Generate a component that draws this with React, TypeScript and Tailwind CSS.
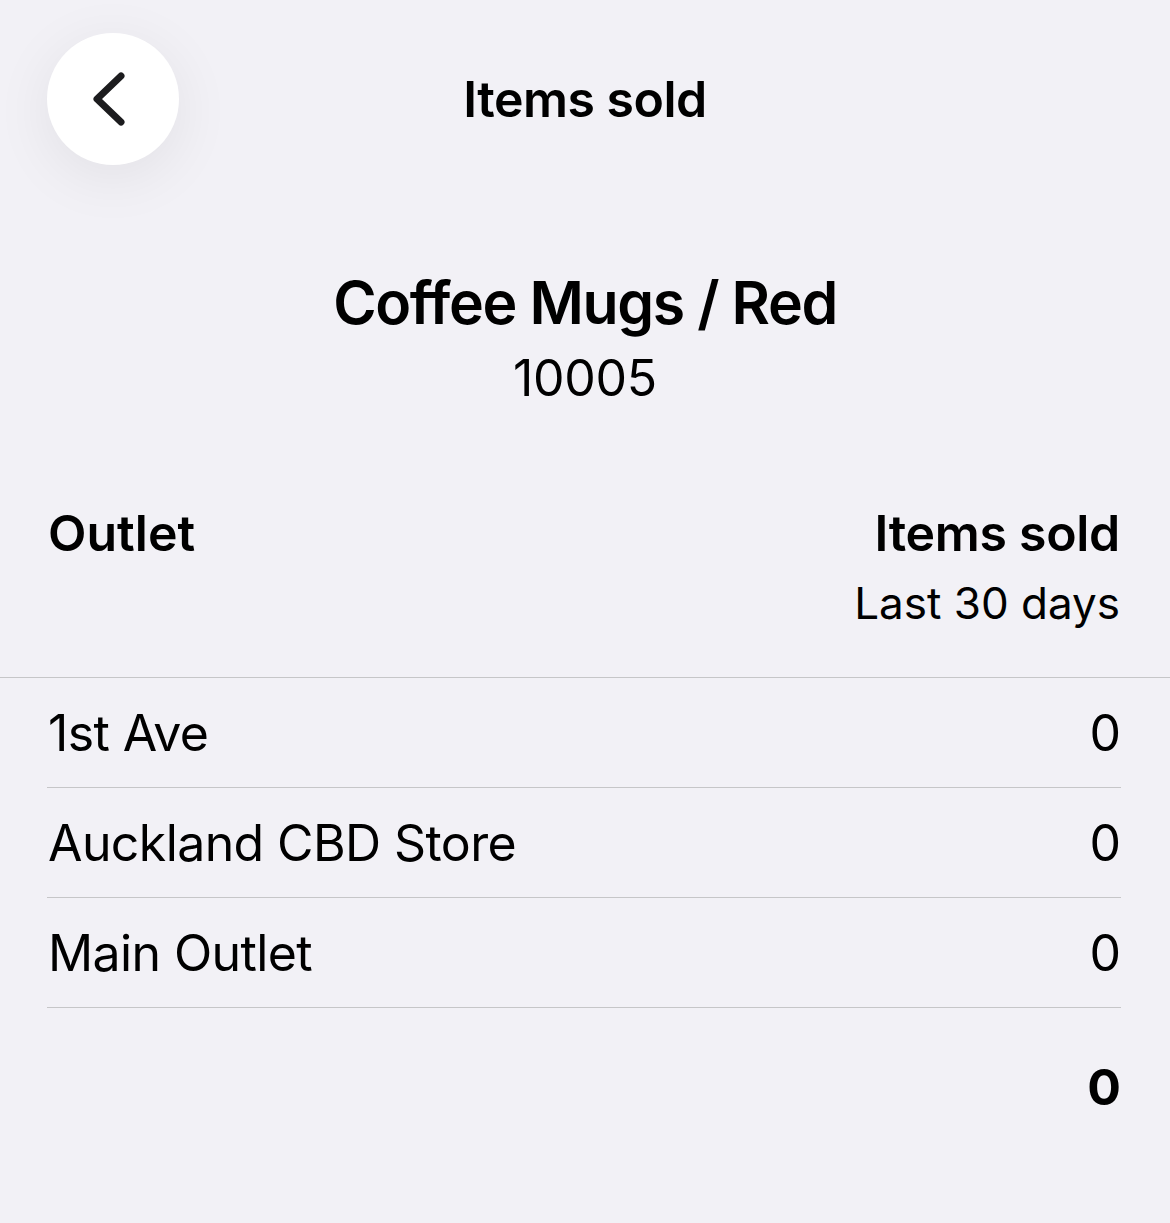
import React from "react";

interface OutletRow { name: string; sold: number; }

const rows: OutletRow[] = [
  { name: "1st Ave", sold: 0 },
  { name: "Auckland CBD Store", sold: 0 },
  { name: "Main Outlet", sold: 0 },
];

export default function App() {
  const total = rows.reduce((sum, r) => sum + r.sold, 0);

  return (
    <div className="min-h-[1223px] w-full bg-[#f2f1f6] text-black" style={{ fontFamily: "Inter, 'Noto Sans', sans-serif" }}>
      {/* Nav bar */}
      <div className="grid grid-cols-[132px_1fr_132px] items-center px-[47px] pt-[33px]">
        <button className="flex h-[132px] w-[132px] items-center justify-center rounded-full bg-white shadow-[0_12px_60px_rgba(0,0,0,0.07)]">
          <svg width="132" height="132" viewBox="0 0 132 132" fill="none">
            <polyline points="74,43 50,66 74,89" stroke="#1c1c1e" strokeWidth="7" strokeLinecap="round" strokeLinejoin="round" />
          </svg>
        </button>
        <h1 className="text-center text-[50px] leading-[62px] font-semibold tracking-[-0.5px]">Items sold</h1>
        <div />
      </div>

      {/* Product */}
      <div className="mt-[101px] flex flex-col items-center">
        <p className="text-[59px] leading-[74px] font-semibold tracking-[-1.4px]">Coffee Mugs / Red</p>
        <p className="mt-[7px] text-[50px] leading-[62px] tracking-[-0.3px]">10005</p>
      </div>

      {/* Table header */}
      <div className="mt-[93px] flex items-start justify-between pl-[48px] pr-[50px] pb-[47px] border-b border-[#c6c6c8]">
        <p className="text-[50px] leading-[62px] font-semibold">Outlet</p>
        <div className="flex flex-col items-end">
          <p className="text-[50px] leading-[62px] font-semibold tracking-[-0.3px]">Items sold</p>
          <p className="mt-[12px] text-[44px] leading-[54px]">Last 30 days</p>
        </div>
      </div>

      {/* Rows */}
      <div className="pl-[47px] pr-[49px]">
        {rows.map(r => (
          <div key={r.name} className="flex h-[110px] items-center justify-between border-b border-[#c6c6c8]">
            <span className="pl-px text-[50px] leading-[62px] tracking-[-0.6px]">{r.name}</span>
            <span className="text-[50px] leading-[62px]">{r.sold}</span>
          </div>
        ))}
        <div className="mt-[48px] flex justify-end">
          <span className="text-[50px] leading-[62px] font-bold">{total}</span>
        </div>
      </div>
    </div>
  );
}
